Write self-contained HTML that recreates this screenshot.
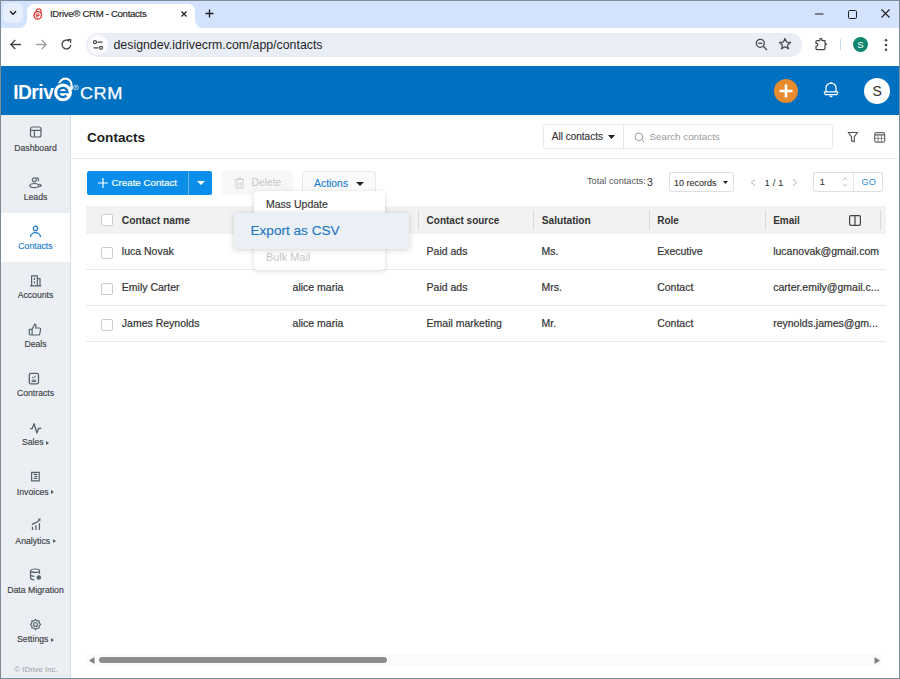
<!DOCTYPE html>
<html><head><meta charset="utf-8">
<style>
*{box-sizing:border-box;margin:0;padding:0}
html,body{width:900px;height:679px;overflow:hidden;background:#fff;font-family:"Liberation Sans",sans-serif;position:relative}
.a{position:absolute}
svg.a{overflow:visible}
.t{position:absolute;line-height:1;white-space:nowrap}
</style></head><body>
<div class="a" style="left:0px;top:0px;width:900px;height:28px;background:#d3e3fd"></div>
<div class="a" style="left:3px;top:3px;width:20px;height:20px;background:#e8effc;border-radius:6px"></div>
<svg class="a" style="left:9px;top:10px" width="8" height="6" viewBox="0 0 8 6"><path d="M1 1.2 L4 4.2 L7 1.2" stroke="#1f1f1f" stroke-width="1.5" fill="none"/></svg>
<div class="a" style="left:27px;top:4px;width:168px;height:25px;background:#fff;border-radius:7px 7px 0 0"></div>
<svg class="a" style="left:19px;top:20px" width="8" height="8" viewBox="0 0 8 8"><path d="M0 8 A8 8 0 0 0 8 0 V8 Z" fill="#fff"/></svg>
<svg class="a" style="left:195px;top:20px" width="8" height="8" viewBox="0 0 8 8"><path d="M8 8 A8 8 0 0 1 0 0 V8 Z" fill="#fff"/></svg>
<svg class="a" style="left:32px;top:7px" width="12" height="13" viewBox="0 0 12 13"><g transform="rotate(12 6 7)"><path d="M3.6 6 V4.3 A2.5 2.5 0 0 1 8.6 4.3 V6" stroke="#e53935" stroke-width="1.35" fill="none"/><circle cx="6" cy="8.4" r="3.8" fill="#fff" stroke="#e53935" stroke-width="1.35"/><path d="M4.4 8.4 H7.6 A1.6 1.6 0 1 0 7 9.7" stroke="#e53935" stroke-width="0.9" fill="none"/></g></svg>
<div class="t" style="left:50.00px;top:9.47px;font-size:9.6px;font-weight:normal;color:#1f1f1f;letter-spacing:-0.3px;-webkit-text-stroke:0.15px #1f1f1f">IDrive® CRM - Contacts</div>
<svg class="a" style="left:181px;top:11px" width="6" height="6" viewBox="0 0 6 6"><path d="M0.5 0.5 L5.5 5.5 M5.5 0.5 L0.5 5.5" stroke="#1f1f1f" stroke-width="1.2"/></svg>
<svg class="a" style="left:205px;top:9px" width="9" height="9" viewBox="0 0 9 9"><path d="M4.5 0.5 V8.5 M0.5 4.5 H8.5" stroke="#1f1f1f" stroke-width="1.35"/></svg>
<svg class="a" style="left:815px;top:9px" width="9" height="10" viewBox="0 0 9 10"><path d="M0 5 H8.5" stroke="#1f1f1f" stroke-width="1"/></svg>
<svg class="a" style="left:848px;top:10px" width="9" height="9" viewBox="0 0 9 9"><rect x="0.5" y="0.5" width="8" height="8" rx="1.2" stroke="#1f1f1f" stroke-width="1" fill="none"/></svg>
<svg class="a" style="left:881px;top:9px" width="9" height="9" viewBox="0 0 9 9"><path d="M0.5 0.5 L8.5 8.5 M8.5 0.5 L0.5 8.5" stroke="#1f1f1f" stroke-width="1.1"/></svg>
<svg class="a" style="left:9px;top:38px" width="13" height="13" viewBox="0 0 13 13"><path d="M12 6.5 H1.8 M6.3 2 L1.8 6.5 L6.3 11" stroke="#474747" stroke-width="1.3" fill="none"/></svg>
<svg class="a" style="left:35px;top:38px" width="13" height="13" viewBox="0 0 13 13"><path d="M1 6.5 H11.2 M6.7 2 L11.2 6.5 L6.7 11" stroke="#a0a0a0" stroke-width="1.3" fill="none"/></svg>
<svg class="a" style="left:60px;top:38px" width="13" height="13" viewBox="0 0 13 13"><path d="M10.8 6.8 A4.4 4.4 0 1 1 9.3 3.2" stroke="#474747" stroke-width="1.35" fill="none"/><path d="M7.4 1.6 H10.6 V4.8" stroke="#474747" stroke-width="1.35" fill="none"/></svg>
<div class="a" style="left:86px;top:33px;width:716px;height:24px;background:#e9eef6;border-radius:12px"></div>
<div class="a" style="left:88px;top:35px;width:20px;height:20px;background:#fdfdff;border-radius:10px"></div>
<svg class="a" style="left:92px;top:40px" width="12" height="10" viewBox="0 0 12 10"><path d="M5.5 2.2 H10.5 M1.5 7.8 H6.5" stroke="#474747" stroke-width="1.3"/><circle cx="3" cy="2.2" r="1.5" stroke="#474747" stroke-width="1.2" fill="none"/><circle cx="9" cy="7.8" r="1.5" stroke="#474747" stroke-width="1.2" fill="none"/></svg>
<div class="t" style="left:113.50px;top:38.55px;font-size:12.35px;font-weight:normal;color:#1f1f1f;">designdev.idrivecrm.com/app/contacts</div>
<svg class="a" style="left:755px;top:38px" width="13" height="13" viewBox="0 0 13 13"><circle cx="5.3" cy="5.3" r="4" stroke="#474747" stroke-width="1.3" fill="none"/><path d="M8.3 8.3 L12 12 M3.3 5.3 H7.3" stroke="#474747" stroke-width="1.3"/></svg>
<svg class="a" style="left:778px;top:37px" width="14" height="14" viewBox="0 0 14 14"><path d="M7 1.5 L8.6 5.1 L12.5 5.4 L9.5 7.9 L10.4 11.8 L7 9.7 L3.6 11.8 L4.5 7.9 L1.5 5.4 L5.4 5.1 Z" stroke="#474747" stroke-width="1.25" fill="none" stroke-linejoin="round"/></svg>
<svg class="a" style="left:814px;top:37px" width="15" height="15" viewBox="0 0 15 15"><path d="M3 3.6 H5.8 V2.5 A1.1 1.1 0 0 1 8 2.5 V3.6 H11 V6.4 L12.6 7.2 L11 8 V11.6 Q11 12.6 10 12.6 H3 Q2 12.6 2 11.6 V9 H2.6 A1.3 1.3 0 0 0 2.6 6.4 H2 V4.6 Q2 3.6 3 3.6 Z" stroke="#474747" stroke-width="1.25" fill="none" stroke-linejoin="round"/></svg>
<div class="a" style="left:840px;top:39px;width:1px;height:11px;background:#c9d8f2"></div>
<div class="a" style="left:853px;top:37px;width:15px;height:15px;background:#11866f;border-radius:8px"></div>
<div class="t" style="left:857.20px;top:39.86px;font-size:9.5px;font-weight:normal;color:#fff;">S</div>
<svg class="a" style="left:883px;top:38px" width="6" height="14" viewBox="0 0 6 14"><circle cx="3" cy="2.3" r="1.25" fill="#474747"/><circle cx="3" cy="7" r="1.25" fill="#474747"/><circle cx="3" cy="11.7" r="1.25" fill="#474747"/></svg>
<div class="a" style="left:0px;top:66px;width:900px;height:49px;background:#0070c0"></div>
<div class="t" style="left:13.20px;top:82.86px;font-size:19.3px;font-weight:bold;color:#fff;letter-spacing:-0.55px">IDriv</div>
<svg class="a" style="left:50px;top:74px" width="32" height="30" viewBox="0 0 32 30"><path d="M9.3 10.8 A6.1 6.1 0 0 1 21.5 10.8 V15" stroke="#fff" stroke-width="2.2" fill="none"/><circle cx="13" cy="18.4" r="9.9" fill="#0070c0"/><path d="M21.5 12 V16" stroke="#fff" stroke-width="2.2"/><circle cx="13" cy="18.4" r="8.9" fill="#fff"/><path d="M8.3 18.2 H17.6 A4.65 4.65 0 1 0 16.4 21.6" stroke="#0070c0" stroke-width="2.3" fill="none"/><circle cx="26" cy="13.5" r="2.4" stroke="#cfe0f0" stroke-width="0.8" fill="none"/><path d="M25.2 14.6 V12.4 H26.4 A0.6 0.6 0 0 1 26.4 13.6 H25.2 M26.2 13.6 L27 14.6" stroke="#cfe0f0" stroke-width="0.6" fill="none"/></svg>
<div class="t" style="left:80.20px;top:85.30px;font-size:16.3px;font-weight:normal;color:#fff;letter-spacing:0.4px;transform:scaleX(1.12);transform-origin:0 0;-webkit-text-stroke:0.25px #fff">CRM</div>
<div class="a" style="left:774px;top:79px;width:24px;height:24px;background:#e88b2e;border-radius:12px"></div>
<svg class="a" style="left:777px;top:82px" width="18" height="18" viewBox="0 0 18 18"><path d="M9 2.5 V15.5 M2.5 9 H15.5" stroke="#fff" stroke-width="2.6"/></svg>
<svg class="a" style="left:822px;top:81px" width="18" height="18" viewBox="0 0 18 18"><path d="M4 10.8 V7 A5 5 0 0 1 14 7 V10.8" stroke="#fff" stroke-width="1.25" fill="none"/><path d="M2.8 10.8 H15.2 Q16 10.8 15.6 11.6 L14.8 13.6 H3.2 L2.4 11.6 Q2 10.8 2.8 10.8 Z" stroke="#fff" stroke-width="1.2" fill="none" stroke-linejoin="round"/><path d="M7.6 14.6 Q9 16.6 10.4 14.6" stroke="#fff" stroke-width="1.1" fill="none"/><circle cx="9" cy="1.8" r="0.9" fill="#fff"/></svg>
<div class="a" style="left:864px;top:78px;width:26px;height:26px;background:#fff;border-radius:13px"></div>
<div class="t" style="left:872.60px;top:84.35px;font-size:14px;font-weight:normal;color:#333;">S</div>
<div class="a" style="left:0px;top:115px;width:70px;height:564px;background:#ebeff3"></div>
<div class="a" style="left:70px;top:115px;width:1px;height:564px;background:#d8dee5"></div>
<div class="a" style="left:1px;top:213px;width:69px;height:49px;background:#fff"></div>
<svg class="a" style="left:29px;top:127px" width="13" height="13" viewBox="0 0 13 13"><g transform="translate(0,0)"><g transform="translate(0,-1)"><rect x="1.5" y="1" width="10.5" height="10" rx="2" stroke="#56626c" stroke-width="1.2" fill="none"/><path d="M1.5 4.4 H12 M5.4 4.4 V11" stroke="#56626c" stroke-width="1.2"/></g></g></svg>
<div class="t" style="left:1px;width:69px;text-align:center;top:143.54px;font-size:8.7px;color:#3d4247;-webkit-text-stroke:0.15px #3d4247">Dashboard</div>
<svg class="a" style="left:29px;top:176px" width="13" height="13" viewBox="0 0 13 13"><g transform="translate(0,0)"><circle cx="5.3" cy="3.8" r="2" stroke="#56626c" stroke-width="1.2" fill="none"/><path d="M7.2 2 A2 2 0 0 1 9.2 5.2" stroke="#56626c" stroke-width="1.2" fill="none"/><ellipse cx="5.3" cy="9.6" rx="4.4" ry="2.1" stroke="#56626c" stroke-width="1.2" fill="none"/><path d="M10.3 8 L12.3 9.6 L10.3 11.2" stroke="#56626c" stroke-width="1.1" fill="none"/></g></svg>
<div class="t" style="left:1px;width:69px;text-align:center;top:192.69px;font-size:8.7px;color:#3d4247;-webkit-text-stroke:0.15px #3d4247">Leads</div>
<svg class="a" style="left:29px;top:225px" width="13" height="13" viewBox="0 0 13 13"><g transform="translate(0,0)"><circle cx="6.5" cy="3.4" r="2.2" stroke="#1a7cd0" stroke-width="1.2" fill="none"/><path d="M1.6 12 A4.9 4.3 0 0 1 11.4 12" stroke="#1a7cd0" stroke-width="1.3" fill="none"/></g></svg>
<div class="t" style="left:1px;width:69px;text-align:center;top:241.84px;font-size:8.7px;color:#1a7cd0;-webkit-text-stroke:0.15px #1a7cd0">Contacts</div>
<svg class="a" style="left:29px;top:274px" width="13" height="13" viewBox="0 0 13 13"><g transform="translate(0,0)"><path d="M2.6 11.8 V1.8 H8.3 V11.8 M8.3 4.6 H11 V11.8 M1 11.8 H12.3 M5.4 3.8 V6 M5.4 7.4 V9.6" stroke="#56626c" stroke-width="1.2" fill="none"/></g></svg>
<div class="t" style="left:1px;width:69px;text-align:center;top:290.99px;font-size:8.7px;color:#3d4247;-webkit-text-stroke:0.15px #3d4247">Accounts</div>
<svg class="a" style="left:29px;top:323px" width="13" height="13" viewBox="0 0 13 13"><g transform="translate(-0.7,0)"><path d="M1 6.3 H3.8 V12 H1.8 A0.9 0.9 0 0 1 1 11.1 Z M3.8 6.3 L6.3 1.2 A1.3 1.3 0 0 1 7.7 2.6 L7.4 5 H11.3 A1 1 0 0 1 12.3 6.2 L11.4 11.1 A1 1 0 0 1 10.4 12 H3.8" stroke="#56626c" stroke-width="1.2" fill="none" stroke-linejoin="round"/></g></svg>
<div class="t" style="left:1px;width:69px;text-align:center;top:340.14px;font-size:8.7px;color:#3d4247;-webkit-text-stroke:0.15px #3d4247">Deals</div>
<svg class="a" style="left:29px;top:372px" width="13" height="13" viewBox="0 0 13 13"><g transform="translate(-1.5,-0.5)"><rect x="1.8" y="1.8" width="9.2" height="10.5" rx="1.5" stroke="#56626c" stroke-width="1.3" fill="none"/><path d="M4.5 5.5 L5.8 6.4 L8.5 4.3 M4.2 8.6 H8.6 M4.2 10 H8.6" stroke="#56626c" stroke-width="1" fill="none"/></g></svg>
<div class="t" style="left:1px;width:69px;text-align:center;top:389.29px;font-size:8.7px;color:#3d4247;-webkit-text-stroke:0.15px #3d4247">Contracts</div>
<svg class="a" style="left:29px;top:422px" width="13" height="13" viewBox="0 0 13 13"><g transform="translate(0.3,-0.3)"><path d="M0.8 7 H2.8 L4.8 2 L7.6 11.3 L9.3 6.6 H12" stroke="#56626c" stroke-width="1.3" fill="none" stroke-linejoin="round"/></g></svg>
<div class="t" style="left:1px;width:69px;text-align:center;top:438.44px;font-size:8.7px;color:#3d4247;-webkit-text-stroke:0.15px #3d4247">Sales<span style="display:inline-block;margin-left:2.5px;width:0;height:0;border-left:3px solid #555b60;border-top:2.5px solid transparent;border-bottom:2.5px solid transparent;vertical-align:0.5px"></span></div>
<svg class="a" style="left:29px;top:471px" width="13" height="13" viewBox="0 0 13 13"><g transform="translate(0,0)"><path d="M2.6 9.8 V1.3 H10.2 V9.8 Z M4.6 3.3 H8.3 M5.6 5.3 H8.3 M4.6 7.3 H8.3" stroke="#56626c" stroke-width="1.25" fill="none"/></g></svg>
<div class="t" style="left:1px;width:69px;text-align:center;top:487.59px;font-size:8.7px;color:#3d4247;-webkit-text-stroke:0.15px #3d4247">Invoices<span style="display:inline-block;margin-left:2.5px;width:0;height:0;border-left:3px solid #555b60;border-top:2.5px solid transparent;border-bottom:2.5px solid transparent;vertical-align:0.5px"></span></div>
<svg class="a" style="left:29px;top:520px" width="13" height="13" viewBox="0 0 13 13"><g transform="translate(0,0)"><path d="M3.5 10 V6.8 M6.9 10 V5.3 M10.4 10 V3.3 M2.8 4.5 Q6.8 3.5 10.3 0.3" stroke="#56626c" stroke-width="1.3" fill="none"/><path d="M8.6 -1.3 L11.6 -1.6 L11.2 1.6 Z" fill="#56626c"/></g></svg>
<div class="t" style="left:1px;width:69px;text-align:center;top:536.74px;font-size:8.7px;color:#3d4247;-webkit-text-stroke:0.15px #3d4247">Analytics<span style="display:inline-block;margin-left:2.5px;width:0;height:0;border-left:3px solid #555b60;border-top:2.5px solid transparent;border-bottom:2.5px solid transparent;vertical-align:0.5px"></span></div>
<svg class="a" style="left:29px;top:569px" width="13" height="13" viewBox="0 0 13 13"><g transform="translate(0,-1.5)"><ellipse cx="6" cy="3.2" rx="4.5" ry="1.7" stroke="#56626c" stroke-width="1.2" fill="none"/><path d="M1.5 3.2 V10.5 Q1.5 12.2 5.3 12.3 M1.5 7 Q1.5 8.6 5.3 8.8 M10.5 3.2 V6.3" stroke="#56626c" stroke-width="1.2" fill="none"/><circle cx="9.8" cy="10" r="2.3" fill="#56626c"/></g></svg>
<div class="t" style="left:1px;width:69px;text-align:center;top:585.89px;font-size:8.7px;color:#3d4247;-webkit-text-stroke:0.15px #3d4247">Data Migration</div>
<svg class="a" style="left:29px;top:618px" width="13" height="13" viewBox="0 0 13 13"><g transform="translate(0,0)"><path d="M6.5 1.3 L8 2.8 L10.1 2.8 L10.1 4.9 L11.6 6.4 L10.1 7.9 L10.1 10 L8 10 L6.5 11.5 L5 10 L2.9 10 L2.9 7.9 L1.4 6.4 L2.9 4.9 L2.9 2.8 L5 2.8 Z" stroke="#56626c" stroke-width="1.2" fill="none" stroke-linejoin="round"/><circle cx="6.5" cy="6.4" r="1.9" stroke="#56626c" stroke-width="1.2" fill="none"/></g></svg>
<div class="t" style="left:1px;width:69px;text-align:center;top:635.04px;font-size:8.7px;color:#3d4247;-webkit-text-stroke:0.15px #3d4247">Settings<span style="display:inline-block;margin-left:2.5px;width:0;height:0;border-left:3px solid #555b60;border-top:2.5px solid transparent;border-bottom:2.5px solid transparent;vertical-align:0.5px"></span></div>
<div class="t" style="left:1.50px;top:665.81px;font-size:7.9px;font-weight:normal;color:#9aa1a8;width:69px;text-align:center">© IDrive Inc.</div>
<div class="t" style="left:87.00px;top:130.69px;font-size:13.6px;font-weight:bold;color:#1d1d1d;">Contacts</div>
<div class="a" style="left:71px;top:158px;width:827px;height:1px;background:#e3e8ee"></div>
<div class="a" style="left:543px;top:124px;width:290px;height:25px;border:1px solid #eaeaea;border-radius:3px;background:#fff"></div>
<div class="a" style="left:623px;top:125px;width:1px;height:23px;background:#e6e6e6"></div>
<div class="t" style="left:551.80px;top:132.23px;font-size:10.0px;font-weight:normal;color:#333;-webkit-text-stroke:0.15px #333">All contacts</div>
<svg class="a" style="left:608px;top:135px" width="7" height="4" viewBox="0 0 7 4"><path d="M0 0 H7 L3.5 4 Z" fill="#222"/></svg>
<svg class="a" style="left:634px;top:132px" width="11" height="11" viewBox="0 0 11 11"><circle cx="4.8" cy="4.8" r="3.8" stroke="#999" stroke-width="1" fill="none"/><path d="M7.6 7.6 L10.3 10.3" stroke="#999" stroke-width="1"/></svg>
<div class="t" style="left:649.50px;top:131.90px;font-size:9.8px;font-weight:normal;color:#9a9a9a;">Search contacts</div>
<svg class="a" style="left:847px;top:131px" width="12" height="12" viewBox="0 0 12 12"><path d="M1.2 1.5 H10.6 L7.3 5.6 V10.8 L4.5 9.9 V5.6 Z" stroke="#555" stroke-width="1.15" fill="none" stroke-linejoin="round"/></svg>
<svg class="a" style="left:874px;top:131px" width="12" height="12" viewBox="0 0 12 12"><rect x="0.7" y="1.6" width="10" height="9.6" rx="1.8" stroke="#666" stroke-width="1.2" fill="none"/><path d="M0.7 3.9 H10.7" stroke="#666" stroke-width="1.3"/><path d="M0.7 7.4 H10.7 M4 3.9 V11.2 M7.4 3.9 V11.2" stroke="#777" stroke-width="0.8"/></svg>
<div class="a" style="left:87px;top:171px;width:125px;height:24px;background:#0b8eea;border-radius:2px"></div>
<div class="a" style="left:188px;top:171px;width:1px;height:24px;background:#68b4ee"></div>
<svg class="a" style="left:98px;top:178px" width="10" height="10" viewBox="0 0 10 10"><path d="M5 0 V10 M0 5 H10" stroke="#fff" stroke-width="1.2"/></svg>
<div class="t" style="left:111.50px;top:177.65px;font-size:9.75px;font-weight:normal;color:#fff;-webkit-text-stroke:0.15px #fff">Create Contact</div>
<svg class="a" style="left:197px;top:181px" width="8" height="4" viewBox="0 0 8 4"><path d="M0 0 H8 L4 4 Z" fill="#fff"/></svg>
<div class="a" style="left:222px;top:171px;width:71px;height:24px;background:#f7f7f7;border-radius:3px"></div>
<svg class="a" style="left:234px;top:177px" width="11" height="12" viewBox="0 0 11 12"><path d="M1 2.5 H10 M4 2.5 V1 H7 V2.5 M2 2.5 V11 H9 V2.5 M4.3 5 V9 M6.7 5 V9" stroke="#cfcfcf" stroke-width="1" fill="none"/></svg>
<div class="t" style="left:251.50px;top:177.88px;font-size:10.3px;font-weight:normal;color:#c8c8c8;">Delete</div>
<div class="a" style="left:302px;top:171px;width:74px;height:25px;border:1px solid #e8e8e8;border-radius:3px;background:#fafafa"></div>
<div class="t" style="left:314.00px;top:178.50px;font-size:10.4px;font-weight:normal;color:#1a7ccc;-webkit-text-stroke:0.12px #1a7ccc">Actions</div>
<svg class="a" style="left:356px;top:182px" width="8" height="4" viewBox="0 0 8 4"><path d="M0 0 H8 L4 4 Z" fill="#222"/></svg>
<div class="t" style="left:587.00px;top:177.41px;font-size:9.2px;font-weight:normal;color:#555;">Total contacts:</div>
<div class="t" style="left:647.00px;top:176.71px;font-size:10.5px;font-weight:normal;color:#333;">3</div>
<div class="a" style="left:669px;top:172px;width:65px;height:20px;border:1px solid #e0e0e0;border-radius:2px;background:#fff"></div>
<div class="t" style="left:674.00px;top:178.58px;font-size:9.0px;font-weight:normal;color:#333;-webkit-text-stroke:0.12px #333">10 records</div>
<svg class="a" style="left:723px;top:181px" width="5" height="3" viewBox="0 0 5 3"><path d="M0 0 H5 L2.5 3 Z" fill="#222"/></svg>
<svg class="a" style="left:750px;top:179px" width="6" height="7" viewBox="0 0 6 7"><path d="M5 0.5 L1.2 3.5 L5 6.5" stroke="#aaa" stroke-width="0.9" fill="none"/></svg>
<div class="t" style="left:764.50px;top:177.90px;font-size:9.8px;font-weight:normal;color:#333;">1 / 1</div>
<svg class="a" style="left:792px;top:179px" width="6" height="7" viewBox="0 0 6 7"><path d="M1 0.5 L4.8 3.5 L1 6.5" stroke="#aaa" stroke-width="0.9" fill="none"/></svg>
<div class="a" style="left:813px;top:172px;width:70px;height:20px;border:1px solid #e0e0e0;border-radius:2px;background:#fff"></div>
<div class="a" style="left:853px;top:173px;width:1px;height:18px;background:#e6e6e6"></div>
<div class="t" style="left:819.50px;top:177.40px;font-size:9.8px;font-weight:normal;color:#333;">1</div>
<svg class="a" style="left:842px;top:177px" width="6" height="10" viewBox="0 0 6 10"><path d="M0.6 3.3 L3 1 L5.4 3.3 M0.6 6.9 L3 9.2 L5.4 6.9" stroke="#bdbdbd" stroke-width="0.9" fill="none"/></svg>
<div class="t" style="left:861.50px;top:178.21px;font-size:9.2px;font-weight:normal;color:#2a8de0;">GO</div>
<div class="a" style="left:86px;top:206px;width:800px;height:28px;background:#f2f2f2"></div>
<div class="a" style="left:418px;top:210px;width:1px;height:20px;background:#dadada"></div>
<div class="a" style="left:533px;top:210px;width:1px;height:20px;background:#dadada"></div>
<div class="a" style="left:649px;top:210px;width:1px;height:20px;background:#dadada"></div>
<div class="a" style="left:765px;top:210px;width:1px;height:20px;background:#dadada"></div>
<div class="a" style="left:880px;top:210px;width:1px;height:20px;background:#dadada"></div>
<div class="a" style="left:86px;top:269px;width:800px;height:1px;background:#e9e9e9"></div>
<div class="a" style="left:86px;top:305px;width:800px;height:1px;background:#e9e9e9"></div>
<div class="a" style="left:86px;top:341px;width:800px;height:1px;background:#e9e9e9"></div>
<div class="a" style="left:101px;top:214px;width:12px;height:12px;border:1px solid #cdcdcd;border-radius:2px;background:#fff"></div>
<div class="a" style="left:101px;top:247px;width:12px;height:12px;border:1px solid #cdcdcd;border-radius:2px;background:#fff"></div>
<div class="a" style="left:101px;top:283px;width:12px;height:12px;border:1px solid #cdcdcd;border-radius:2px;background:#fff"></div>
<div class="a" style="left:101px;top:319px;width:12px;height:12px;border:1px solid #cdcdcd;border-radius:2px;background:#fff"></div>
<div class="t" style="left:121.80px;top:215.78px;font-size:10.3px;font-weight:bold;color:#333;">Contact name</div>
<div class="t" style="left:426.60px;top:216.03px;font-size:10.0px;font-weight:bold;color:#333;">Contact source</div>
<div class="t" style="left:541.80px;top:215.91px;font-size:10.15px;font-weight:bold;color:#333;">Salutation</div>
<div class="t" style="left:657.20px;top:216.03px;font-size:10px;font-weight:bold;color:#333;">Role</div>
<div class="t" style="left:773.20px;top:216.03px;font-size:10.0px;font-weight:bold;color:#333;">Email</div>
<svg class="a" style="left:849px;top:215px" width="12" height="11" viewBox="0 0 12 11"><rect x="0.6" y="0.6" width="10.8" height="9.8" rx="1.3" stroke="#444" stroke-width="1.2" fill="none"/><path d="M6 0.6 V10.4" stroke="#444" stroke-width="1.2"/></svg>
<div class="t" style="left:121.80px;top:246.11px;font-size:10.5px;font-weight:normal;color:#333;-webkit-text-stroke:0.2px #333">luca Novak</div>
<div class="t" style="left:292.60px;top:246.11px;font-size:10.5px;font-weight:normal;color:#333;-webkit-text-stroke:0.2px #333">alice maria</div>
<div class="t" style="left:426.60px;top:246.11px;font-size:10.5px;font-weight:normal;color:#333;-webkit-text-stroke:0.2px #333">Paid ads</div>
<div class="t" style="left:541.50px;top:246.11px;font-size:10.5px;font-weight:normal;color:#333;-webkit-text-stroke:0.2px #333">Ms.</div>
<div class="t" style="left:657.20px;top:246.11px;font-size:10.5px;font-weight:normal;color:#333;-webkit-text-stroke:0.2px #333">Executive</div>
<div class="t" style="left:773.20px;top:246.11px;font-size:10.5px;font-weight:normal;color:#333;-webkit-text-stroke:0.2px #333">lucanovak@gmail.com</div>
<div class="t" style="left:121.80px;top:282.11px;font-size:10.5px;font-weight:normal;color:#333;-webkit-text-stroke:0.2px #333">Emily Carter</div>
<div class="t" style="left:292.60px;top:282.11px;font-size:10.5px;font-weight:normal;color:#333;-webkit-text-stroke:0.2px #333">alice maria</div>
<div class="t" style="left:426.60px;top:282.11px;font-size:10.5px;font-weight:normal;color:#333;-webkit-text-stroke:0.2px #333">Paid ads</div>
<div class="t" style="left:541.50px;top:282.11px;font-size:10.5px;font-weight:normal;color:#333;-webkit-text-stroke:0.2px #333">Mrs.</div>
<div class="t" style="left:657.20px;top:282.11px;font-size:10.5px;font-weight:normal;color:#333;-webkit-text-stroke:0.2px #333">Contact</div>
<div class="t" style="left:773.20px;top:282.11px;font-size:10.5px;font-weight:normal;color:#333;-webkit-text-stroke:0.2px #333">carter.emily@gmail.c...</div>
<div class="t" style="left:121.80px;top:318.11px;font-size:10.5px;font-weight:normal;color:#333;-webkit-text-stroke:0.2px #333">James Reynolds</div>
<div class="t" style="left:292.60px;top:318.11px;font-size:10.5px;font-weight:normal;color:#333;-webkit-text-stroke:0.2px #333">alice maria</div>
<div class="t" style="left:426.60px;top:318.11px;font-size:10.5px;font-weight:normal;color:#333;-webkit-text-stroke:0.2px #333">Email marketing</div>
<div class="t" style="left:541.50px;top:318.11px;font-size:10.5px;font-weight:normal;color:#333;-webkit-text-stroke:0.2px #333">Mr.</div>
<div class="t" style="left:657.20px;top:318.11px;font-size:10.5px;font-weight:normal;color:#333;-webkit-text-stroke:0.2px #333">Contact</div>
<div class="t" style="left:773.20px;top:318.11px;font-size:10.5px;font-weight:normal;color:#333;-webkit-text-stroke:0.2px #333">reynolds.james@gm...</div>
<div class="a" style="left:254px;top:191px;width:131px;height:79px;background:#fff;border-radius:4px;box-shadow:0 1px 5px rgba(0,0,0,0.16)"></div>
<div class="t" style="left:266.00px;top:199.31px;font-size:10.5px;font-weight:normal;color:#333;-webkit-text-stroke:0.15px #333">Mass Update</div>
<div class="t" style="left:266.00px;top:251.67px;font-size:10.9px;font-weight:normal;color:#c6c6c6;">Bulk Mail</div>
<div class="a" style="left:234px;top:213px;width:175px;height:36px;background:#ebf0f7;box-shadow:0 1px 6px rgba(0,0,0,0.18)"></div>
<div class="t" style="left:250.50px;top:224.39px;font-size:13.6px;font-weight:normal;color:#1f78c1;-webkit-text-stroke:0.15px #1f78c1">Export as CSV</div>
<div class="a" style="left:86px;top:654px;width:797px;height:12px;background:#fbfbfb"></div>
<svg class="a" style="left:89px;top:657px" width="6" height="7" viewBox="0 0 6 7"><path d="M5.5 0 V7 L0 3.5 Z" fill="#7f7f7f"/></svg>
<div class="a" style="left:99px;top:657px;width:288px;height:6px;background:#8c8c8c;border-radius:3px"></div>
<svg class="a" style="left:874px;top:657px" width="6" height="7" viewBox="0 0 6 7"><path d="M0.5 0 V7 L6 3.5 Z" fill="#7f7f7f"/></svg>
<div class="a" style="left:0;top:0;width:900px;height:679px;border:1px solid #7d8b98;"></div>
</body></html>
